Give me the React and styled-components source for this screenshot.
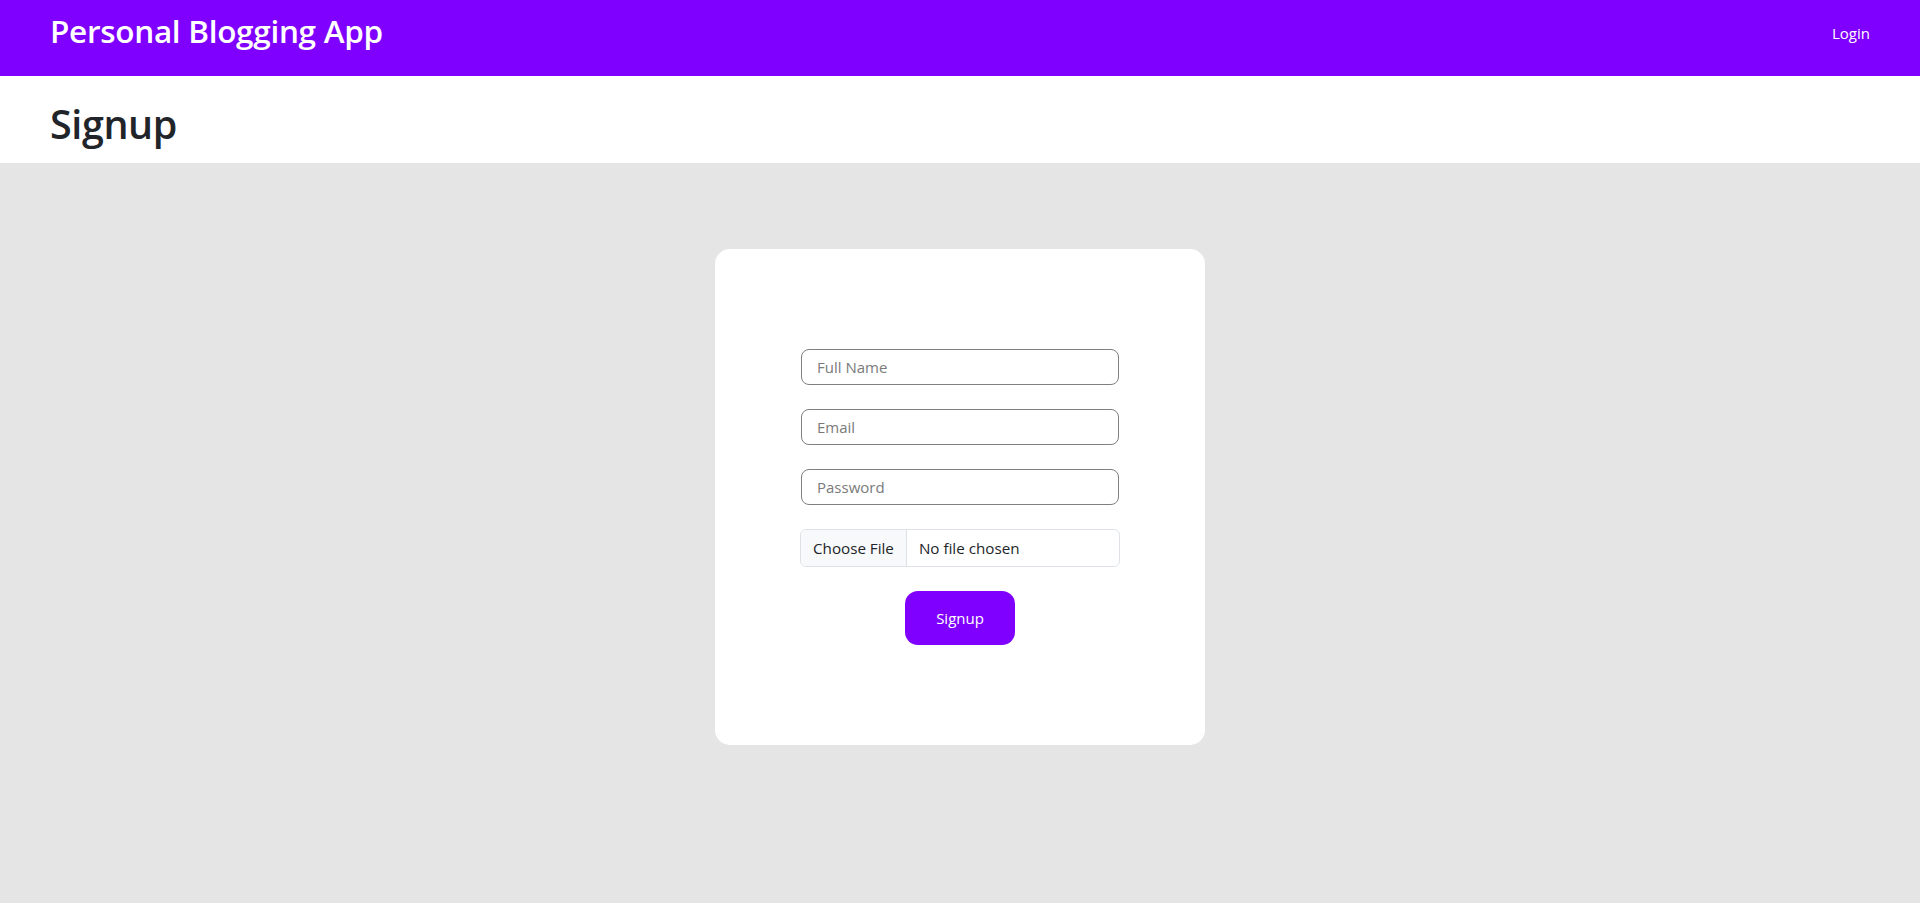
import React, { useState } from 'react';
import styled, { createGlobalStyle } from 'styled-components';

const GlobalStyle = createGlobalStyle`
  * { box-sizing: border-box; }
  html, body {
    margin: 0;
    padding: 0;
    min-height: 100%;
    background-color: #e5e5e5;
    font-family: "Open Sans", "Noto Sans", "Liberation Sans", sans-serif;
    color: #212529;
  }
`;

// top bar
const NavBar = styled.nav`
  height: 76px;
  background-color: #7f00ff;
  display: flex;
  align-items: center;
  justify-content: space-between;
  padding: 0 50px 16px 50px;
`;

const Brand = styled.a`
  color: #ffffff;
  font-size: 31.5px;
  font-weight: 600;
  letter-spacing: -0.3px;
  text-decoration: none;
  cursor: pointer;
`;

const NavLink = styled.a`
  color: #ffffff;
  font-size: 15px;
  text-decoration: none;
  cursor: pointer;
  margin-top: 6px;
`;

// page title band
const TitleBand = styled.header`
  background-color: #ffffff;
  height: 87px;
  display: flex;
  align-items: center;
  padding: 8px 50px 0 50px;
`;

const PageTitle = styled.h1`
  margin: 0;
  font-size: 39.5px;
  font-weight: 600;
  letter-spacing: -0.4px;
  color: #212529;
`;

const Main = styled.main`
  display: flex;
  justify-content: center;
  padding-top: 86px;
  padding-bottom: 80px;
`;

const Card = styled.div`
  width: 490px;
  min-height: 495px;
  background-color: #ffffff;
  border-radius: 15px;
  padding: 100px 0;
  display: flex;
  justify-content: center;
`;

const Form = styled.form`
  width: 320px;
  display: flex;
  flex-direction: column;
  align-items: center;
`;

const TextInput = styled.input`
  width: 318px;
  height: 36px;
  margin-bottom: 24px;
  padding: 0 15px;
  border: 1px solid #808080;
  border-radius: 8px;
  font-family: inherit;
  font-size: 15px;
  color: #212529;
  outline: none;

  &::placeholder {
    color: #7a7a7a;
  }
`;

const FileField = styled.label`
  width: 320px;
  height: 38px;
  display: flex;
  align-items: stretch;
  border: 1px solid #dee2e6;
  border-radius: 6px;
  overflow: hidden;
  font-size: 15.2px;
  color: #212529;
  cursor: pointer;

  input {
    display: none;
  }
`;

const FileButton = styled.span`
  display: flex;
  align-items: center;
  padding: 0 12px;
  background-color: #f8f9fa;
  border-right: 1px solid #dee2e6;
`;

const FileName = styled.span`
  display: flex;
  align-items: center;
  padding: 0 12px;
`;

const SubmitButton = styled.button`
  margin-top: 24px;
  width: 110px;
  height: 54px;
  border: none;
  border-radius: 13px;
  background-color: #7f00ff;
  color: #ffffff;
  font-family: inherit;
  font-size: 15px;
  cursor: pointer;

  &:hover {
    background-color: #6f00e0;
  }
`;

function App() {
  const [fileName, setFileName] = useState('No file chosen');

  return (
    <>
      <GlobalStyle />
      <NavBar>
        <Brand>Personal Blogging App</Brand>
        <NavLink>Login</NavLink>
      </NavBar>

      <TitleBand>
        <PageTitle>Signup</PageTitle>
      </TitleBand>

      <Main>
        <Card>
          <Form onSubmit={(e) => e.preventDefault()}>
            <TextInput type="text" placeholder="Full Name" />
            <TextInput type="email" placeholder="Email" />
            <TextInput type="password" placeholder="Password" />
            <FileField>
              <input
                type="file"
                onChange={(e) => setFileName(e.target.files[0] ? e.target.files[0].name : 'No file chosen')}
              />
              <FileButton>Choose File</FileButton>
              <FileName>{fileName}</FileName>
            </FileField>
            <SubmitButton type="submit">Signup</SubmitButton>
          </Form>
        </Card>
      </Main>
    </>
  );
}

export default App;
